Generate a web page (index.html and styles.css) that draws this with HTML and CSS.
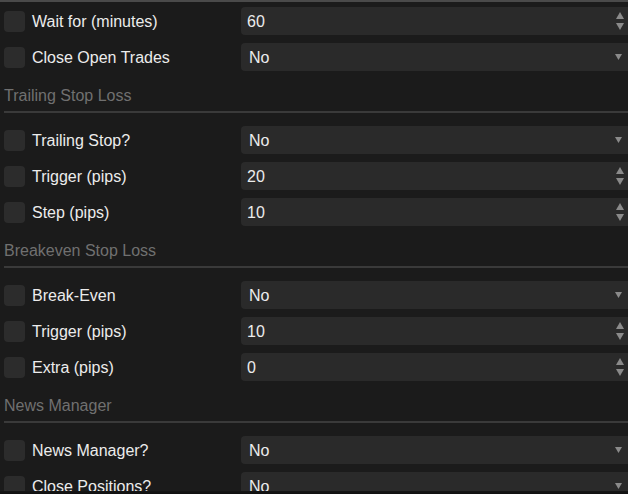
FILE: index.html
```html
<!DOCTYPE html>
<html>
<head>
<meta charset="utf-8">
<link rel="stylesheet" href="styles.css">
</head>
<body>
<div class="panel">
  <div class="row"><span class="check"></span><span class="label">Wait for (minutes)</span><div class="field num"><span class="val">60</span><svg class="spin" width="8" height="18" viewBox="0 0 8 18"><polygon points="4,0 8,7 0,7"/><polygon points="0,11 8,11 4,18"/></svg></div></div>
  <div class="row"><span class="check"></span><span class="label">Close Open Trades</span><div class="field sel"><span class="val">No</span><svg class="drop" width="7" height="6" viewBox="0 0 7 6"><polygon points="0,0 7,0 3.5,6"/></svg></div></div>

  <div class="section">Trailing Stop Loss</div>
  <div class="row"><span class="check"></span><span class="label">Trailing Stop?</span><div class="field sel"><span class="val">No</span><svg class="drop" width="7" height="6" viewBox="0 0 7 6"><polygon points="0,0 7,0 3.5,6"/></svg></div></div>
  <div class="row"><span class="check"></span><span class="label">Trigger (pips)</span><div class="field num"><span class="val">20</span><svg class="spin" width="8" height="18" viewBox="0 0 8 18"><polygon points="4,0 8,7 0,7"/><polygon points="0,11 8,11 4,18"/></svg></div></div>
  <div class="row"><span class="check"></span><span class="label">Step (pips)</span><div class="field num"><span class="val">10</span><svg class="spin" width="8" height="18" viewBox="0 0 8 18"><polygon points="4,0 8,7 0,7"/><polygon points="0,11 8,11 4,18"/></svg></div></div>

  <div class="section">Breakeven Stop Loss</div>
  <div class="row"><span class="check"></span><span class="label">Break-Even</span><div class="field sel"><span class="val">No</span><svg class="drop" width="7" height="6" viewBox="0 0 7 6"><polygon points="0,0 7,0 3.5,6"/></svg></div></div>
  <div class="row"><span class="check"></span><span class="label">Trigger (pips)</span><div class="field num"><span class="val">10</span><svg class="spin" width="8" height="18" viewBox="0 0 8 18"><polygon points="4,0 8,7 0,7"/><polygon points="0,11 8,11 4,18"/></svg></div></div>
  <div class="row"><span class="check"></span><span class="label">Extra (pips)</span><div class="field num"><span class="val">0</span><svg class="spin" width="8" height="18" viewBox="0 0 8 18"><polygon points="4,0 8,7 0,7"/><polygon points="0,11 8,11 4,18"/></svg></div></div>

  <div class="section">News Manager</div>
  <div class="row"><span class="check"></span><span class="label">News Manager?</span><div class="field sel"><span class="val">No</span><svg class="drop" width="7" height="6" viewBox="0 0 7 6"><polygon points="0,0 7,0 3.5,6"/></svg></div></div>
  <div class="row"><span class="check"></span><span class="label">Close Positions?</span><div class="field sel"><span class="val">No</span><svg class="drop" width="7" height="6" viewBox="0 0 7 6"><polygon points="0,0 7,0 3.5,6"/></svg></div></div>
</div>
<div class="bottom-edge"></div>
</body>
</html>
```

FILE: styles.css
```css
html, body {
  margin: 0;
  padding: 0;
  background: #1b1b1b;
  overflow: hidden;
  height: 100%;
}
body {
  font-family: "Liberation Sans", Arial, sans-serif;
  font-size: 16px;
  color: #e8e8e8;
}
.panel {
  border-top: 2px solid #4a4a4a;
  padding: 5px 0 0 4px;
}
.row {
  display: grid;
  grid-template-columns: 21px 202px 387px;
  column-gap: 7px;
  align-items: center;
  height: 28px;
  margin-bottom: 8px;
}
.check {
  width: 21px;
  height: 21px;
  border-radius: 4px;
  background: #2c2c2c;
}
.label {
  line-height: 19px;
  white-space: nowrap;
  color: #ececec;
}
.field {
  height: 28px;
  background: #2a2a2a;
  border-radius: 4px 0 0 4px;
  display: flex;
  align-items: center;
  justify-content: space-between;
}
.field.num { padding-left: 6px; }
.field.sel { padding-left: 8px; }
.val {
  line-height: 19px;
  color: #ececec;
}
.spin {
  fill: #8a8a8a;
  margin-right: 4px;
  display: block;
}
.drop {
  fill: #8a8a8a;
  margin-right: 6px;
  display: block;
}
.section {
  padding: 7px 0 6px 0;
  line-height: 19px;
  color: #707070;
  border-bottom: 2px solid #3a3a3a;
  margin-bottom: 13px;
}
.bottom-edge {
  position: fixed;
  left: 0;
  right: 0;
  bottom: 0;
  height: 3px;
  background: linear-gradient(#161616, #101010);
}
```
